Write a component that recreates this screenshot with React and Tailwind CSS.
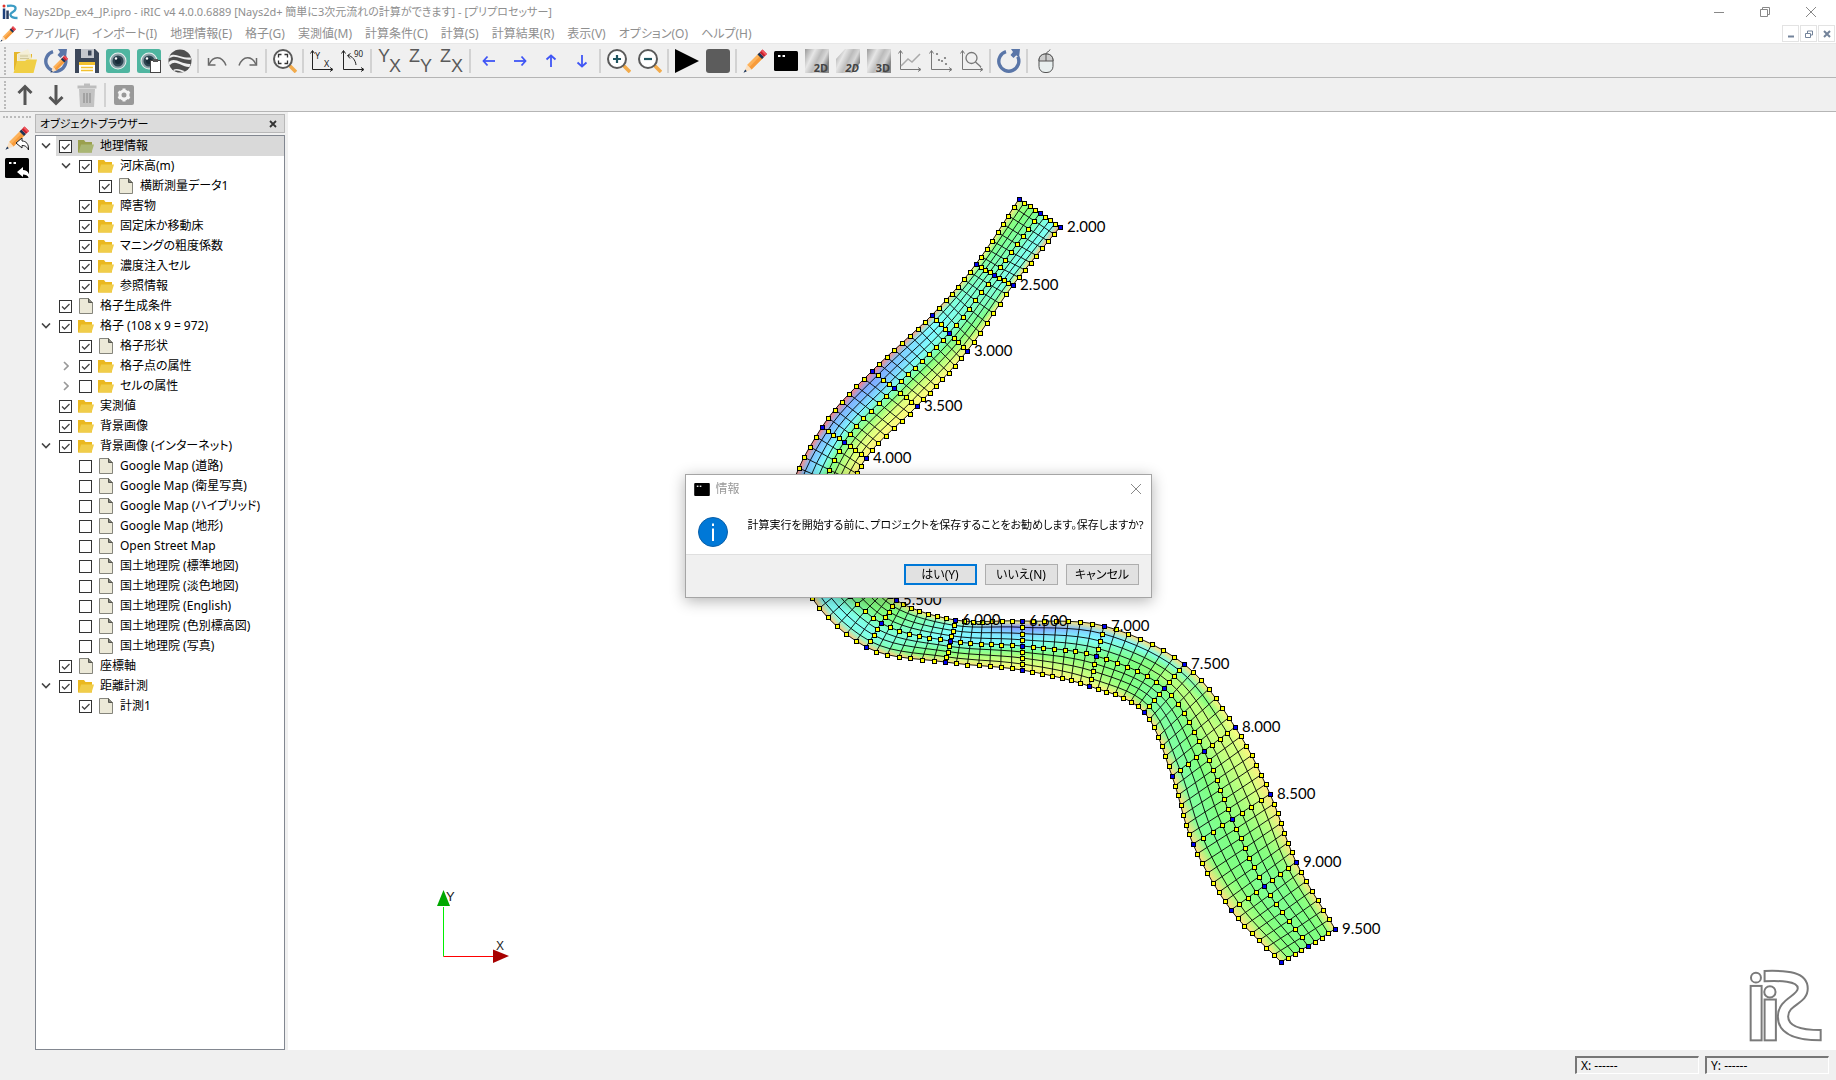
import React from "react";

/* ---------- small shared icons ---------- */

const Svg = ({ children, box = "0 0 24 24", className = "size-6" }) => (
  <svg viewBox={box} className={className} fill="none" aria-hidden="true">
    {children}
  </svg>
);

const PencilShape = () => (
  <>
    <path d="M4 16 L16 4 L20.500 8.500 L8.500 20.500 Z" fill="#fdb25a" />
    <path d="M6.500 18 L18 6 L20.500 8.500 L8.500 20.500 Z" fill="#f79b3b" />
    <path d="M4 16 L8.500 20.500 L1 23.500 Z" fill="#fbe0c0" />
    <path d="M2.200 20.500 L3.800 22.300 L0.500 23.800 Z" fill="#12305a" />
    <path d="M14.500 5.500 L16.500 3.500 L21 8 L19 10 Z" fill="#1d3557" />
    <path d="M16.500 3.500 L19.500 0.500 L24 5 L21 8 Z" fill="#c8202c" />
    <path d="M18 2 L19.500 0.500 L24 5 L22.500 6.500 Z" fill="#f0545c" />
  </>
);

const Pencil = ({ className }) => <Svg className={className}><PencilShape /></Svg>;

const Solver = ({ className, box = "0 0 24 20" }) => (
  <Svg box={box} className={className}>
    <rect width="24" height="20" rx="1.500" fill="#000" />
    <rect x="4" y="4" width="2.500" height="2" fill="#fff" />
    <rect x="8.500" y="4" width="2.500" height="2" fill="#fff" />
  </Svg>
);

const OpenFolder = () => (
  <Svg>
    <path d="M1 3 h6 l2 2 h10 v16 H1 Z" fill="#e5b62a" />
    <path d="M4 5 L15 0 L20 12 H4 Z" fill="#f4efd8" />
    <path d="M5 5 H18 V14 H5 Z" fill="#efe9c9" />
    <path d="M7 7 h8 M7 9.500 h9" stroke="#cfc79a" />
    <path d="M0.500 24 L4 12 H12 L14 10.500 H24 L20.500 24 Z" fill="#f0cf45" />
  </Svg>
);

const SwirlShape = () => (
  <>
    <path d="M9 2.600 A10 10 0 1 0 20.800 7.800" stroke="#5a76a8" strokeWidth="3.400" />
    <path d="M14 0 H23 L22 9 L19.300 6.200 L16.500 9 L13.500 6 L16 3 Z" fill="#5a76a8" />
  </>
);

const Reload = () => <Svg><SwirlShape /></Svg>;

const ReloadEdit = () => (
  <Svg>
    <SwirlShape />
    <g transform="translate(6 6) scale(.75)"><PencilShape /></g>
  </Svg>
);

const Save = () => (
  <Svg>
    <path d="M0 0 H20 L24 4 V24 H0 Z" fill="#3c4759" />
    <rect x="6" y="0" width="13" height="9" fill="#c5c8ce" />
    <rect x="13" y="1.500" width="3.500" height="5" fill="#3c4759" />
    <rect x="4" y="13" width="16" height="11" fill="#fff" />
    <rect x="4" y="13" width="16" height="3" fill="#f3c12f" />
    <path d="M6 18.500 h12 M6 21.500 h12" stroke="#f3c12f" strokeWidth="1.600" />
  </Svg>
);

const Eye = ({ clip }) => (
  <Svg>
    <rect width="24" height="24" rx="2.500" fill="#4fb5a0" />
    <circle cx="12" cy="12" r="8.500" fill="#e9f1f0" />
    <circle cx="12" cy="12" r="7.500" fill="#8ea3aa" />
    <circle cx="12" cy="12" r="5.500" fill="#2d4350" />
    <circle cx="12" cy="12" r="3" fill="#182b38" />
    <circle cx="10" cy="9.500" r="1.200" fill="#fff" />
    {clip && (
      <>
        <rect x="13.500" y="11.500" width="10" height="12" fill="#fff" stroke="#444" />
        <rect x="16" y="10" width="5" height="3" fill="#555" />
      </>
    )}
  </Svg>
);

const Globe = () => (
  <Svg>
    <circle cx="12" cy="12" r="11.500" fill="#4f4f4f" />
    <path d="M1.500 7 C7 3 13 9.500 22.800 8.500 L23 10.500 C14 12 8 4.500 1 9.500 Z" fill="#f0f0f0" />
    <path d="M0.600 13.500 C6 7 13 15.500 22.500 15 L21.500 18 C13 18.500 8 9.500 1.500 16.500 Z" fill="#f0f0f0" />
    <path d="M5 21 C9 18.500 13 21 17 22.300 L14.500 23.300 C11 22 9 21 6.500 22 Z" fill="#f0f0f0" />
  </Svg>
);

const Undo = ({ flip }) => (
  <Svg>
    <g transform={flip ? "translate(24 0) scale(-1 1)" : undefined} stroke="#6a6a6a" strokeWidth="1.500">
      <path d="M3.500 9 V16 H10.500" />
      <path d="M4 15.500 C8 6.500 17 6 21 16.500" />
    </g>
  </Svg>
);

const Lens = ({ children, color = "#f2ab4c" }) => (
  <Svg>
    <path d="M16.500 16.500 L23 23" stroke={color} strokeWidth="3.600" />
    <circle cx="10" cy="10" r="9" fill="#fff" stroke="#5a5a5a" strokeWidth="2" />
    {children}
  </Svg>
);

const Axes = ({ children, color = "#222" }) => (
  <Svg>
    <path d="M2.500 2 V20.500 H22" stroke={color} />
    <path d="M0.500 4.500 L2.500 1.500 L4.500 4.500 M20 18.500 L23 20.500 L20 22.500" stroke={color} />
    {children}
  </Svg>
);

const Pair = ({ a, b }) => (
  <Svg>
    <g fontSize="18" fontFamily="Liberation Sans" fill="#5a5a5a">
      <text x="0" y="13">{a}</text>
      <text x="11" y="23">{b}</text>
    </g>
  </Svg>
);

const Arrow = ({ angle }) => (
  <Svg>
    <g transform={`rotate(${angle} 12 12)`} stroke="#3f55f5" strokeWidth="1.800">
      <path d="M18 12 H6.500" />
      <path d="M10.500 7.500 L6.500 12 L10.500 16.500" />
    </g>
  </Svg>
);

const Post = ({ text, id, skew }) => (
  <Svg>
    <defs>
      <linearGradient id={id} x1="0" y1="0" x2="1" y2="0.5">
        <stop offset="0" stopColor="#999" />
        <stop offset="0.35" stopColor="#e6e6e6" />
        <stop offset="0.6" stopColor="#bbb" />
        <stop offset="0.8" stopColor="#d8d8d8" />
        <stop offset="1" stopColor="#888" />
      </linearGradient>
    </defs>
    <path d={skew ? "M9 0 H24 V14 L16 24 H0 V10 Z" : "M0 0 H24 V24 H0 Z"} fill={`url(#${id})`} />
    <text x="23" y="23" textAnchor="end" fontSize="11" fontWeight="700" fontStyle={skew ? "italic" : "normal"} fill="#444">
      {text}
    </text>
  </Svg>
);

const Mouse = () => (
  <Svg>
    <path d="M12 6 C12 2 15 3.500 16 0.500" stroke="#555" />
    <rect x="5" y="5" width="14" height="18.500" rx="6" fill="#e8efef" stroke="#555" />
    <path d="M5 12 V11 a6 6 0 0 1 6 -6 h2 a6 6 0 0 1 6 6 v1 Z" fill="#ccc" stroke="#555" />
    <path d="M12 5 V12" stroke="#555" />
  </Svg>
);

const UpArrow = ({ down }) => (
  <Svg>
    <g transform={down ? "rotate(180 12 12)" : undefined} stroke="#555" strokeWidth="3">
      <path d="M12 22 V4" />
      <path d="M5.500 10 L12 3.500 L18.500 10" />
    </g>
  </Svg>
);

const Trash = () => (
  <Svg>
    <path d="M4 6 H20 L19 24 H5 Z" fill="#c3c3c3" />
    <path d="M2.500 2.500 h19 v3 h-19 Z M9 0.500 h6 v2 h-6 Z" fill="#bdbdbd" />
    <path d="M9 10 v10 M12 10 v10 M15 10 v10" stroke="#999" strokeWidth="1.500" />
  </Svg>
);

const Gear = () => (
  <Svg>
    <rect x="2" y="2" width="20" height="20" rx="2" fill="#999" />
    <circle cx="12" cy="12" r="4" stroke="#f4f4f4" strokeWidth="3" />
    <path d="M12 5.500 V8 M12 16 v2.500 M6.400 8.700 l2 1.200 M15.600 14.100 l2 1.200 M6.400 15.300 l2 -1.200 M15.600 9.900 l2 -1.200" stroke="#f4f4f4" strokeWidth="3" />
  </Svg>
);

const ReturnArrow = ({ dark }) => (
  <path
    d="M11 17 L17 12 V15 C21 15 24 18 23.500 24 C22 20.500 20 19.500 17 19.500 V22 Z"
    fill="#fff"
    stroke={dark ? "none" : "#222"}
  />
);

const IricMark = () => (
  <Svg box="0 0 16 16" className="size-4">
    <circle cx="2" cy="2" r="1.500" fill="#e0342b" />
    <path d="M0.800 4.500 h2.500 V15 h-2.500 Z" fill="#1d3f7a" />
    <path d="M4.300 6.500 h2.500 V15 h-2.500 Z" fill="#2a3c60" />
    <path d="M5 2 C11 1 14 2 13.500 5 C13 8 8 8 8.500 11 C9 13.500 12 14 15.500 14" stroke="#3c9cc4" strokeWidth="2.300" />
  </Svg>
);

/* ---------- window chrome ---------- */

const menus = [
  "ファイル(F)", "インポート(I)", "地理情報(E)", "格子(G)", "実測値(M)", "計算条件(C)",
  "計算(S)", "計算結果(R)", "表示(V)", "オプション(O)", "ヘルプ(H)",
];

const TitleBar = () => (
  <header className="flex h-6 items-center bg-white pl-0.5 text-[#8f8f8f]">
    <IricMark />
    <h1 className="ml-1.5 whitespace-nowrap text-[11px]">
      Nays2Dp_ex4_JP.ipro - iRIC v4 4.0.0.6889 [Nays2d+ 簡単に3次元流れの計算ができます] - [プリプロセッサー]
    </h1>
    <div className="ml-auto flex pr-0.5">
      <button aria-label="最小化" className="grid h-5 w-[46px] place-items-center">
        <Svg box="0 0 10 10" className="size-2.5"><path d="M0 5.500 H10" stroke="#888" /></Svg>
      </button>
      <button aria-label="元に戻す" className="grid h-5 w-[46px] place-items-center">
        <Svg box="0 0 10 10" className="size-2.5">
          <path d="M0.500 2.500 h7 v7 h-7 Z M2.500 2.500 v-2 h7 v7 h-2" stroke="#888" />
        </Svg>
      </button>
      <button aria-label="閉じる" className="grid h-5 w-[46px] place-items-center">
        <Svg box="0 0 10 10" className="size-2.5"><path d="M0 0 L10 10 M10 0 L0 10" stroke="#888" /></Svg>
      </button>
    </div>
  </header>
);

const MdiButton = ({ label, children }) => (
  <button aria-label={label} className="grid size-[17px] place-items-center border border-[#e3e3e3] bg-white">
    <Svg box="0 0 8 8" className="size-2">{children}</Svg>
  </button>
);

const MenuBar = () => (
  <nav className="flex h-5 items-center border-b border-[#e8e8e8] bg-white pr-px text-[#8f8f8f]">
    <Pencil className="size-4" />
    <div className="ml-2 flex gap-[13px] whitespace-nowrap text-xs">
      {menus.map((m) => <button key={m}>{m}</button>)}
    </div>
    <div className="ml-auto flex gap-px">
      <MdiButton label="ウィンドウを最小化"><path d="M1 6.500 h6" stroke="#73839a" strokeWidth="2" /></MdiButton>
      <MdiButton label="ウィンドウを元に戻す"><path d="M0.500 3.500 h5 v4 h-5 Z M2.500 3 v-2 h5 v4 h-1.500" stroke="#73839a" /></MdiButton>
      <MdiButton label="ウィンドウを閉じる"><path d="M1 1 L7 7 M7 1 L1 7" stroke="#73839a" strokeWidth="2" /></MdiButton>
    </div>
  </nav>
);

const Grip = () => <span className="h-7 w-0.5 shrink-0 border-l-2 border-dotted border-[#bbb]" />;

const tools = [
  ["プロジェクトを開く", <OpenFolder />],
  ["再読み込みと編集", <ReloadEdit />],
  ["保存", <Save />],
  ["スナップショット", <Eye />],
  ["スナップショットをコピー", <Eye clip />],
  ["Google Earth", <Globe />],
  null,
  ["元に戻す", <Undo />],
  ["やり直し", <Undo flip />],
  null,
  ["全体表示", (
    <Lens>
      <path d="M5.500 8.500 v-3 h3 M11.500 5.500 h3 v3 M14.500 11.500 v3 h-3 M8.500 14.500 h-3 v-3" stroke="#333" strokeWidth="1.300" />
    </Lens>
  )],
  null,
  ["回転リセット", (
    <Axes>
      <text x="5" y="10" fontSize="9" fill="#222">Y</text>
      <text x="14" y="18" fontSize="9" fill="#222">X</text>
    </Axes>
  )],
  ["90度回転", (
    <Axes>
      <path d="M7 6.500 C11 7 14.500 11 15 16 M9.500 4.500 L6.500 6.500 L9 9.500" stroke="#222" />
      <text x="13" y="8" fontSize="8" fill="#222">90</text>
    </Axes>
  )],
  null,
  ["XY平面", <Pair a="Y" b="X" />],
  ["YZ平面", <Pair a="Z" b="Y" />],
  ["XZ平面", <Pair a="Z" b="X" />],
  null,
  ["左へ移動", <Arrow angle={0} />],
  ["右へ移動", <Arrow angle={180} />],
  ["上へ移動", <Arrow angle={90} />],
  ["下へ移動", <Arrow angle={270} />],
  null,
  ["拡大", <Lens><path d="M6 10 h8 M10 6 v8" stroke="#1f5560" strokeWidth="2.200" /></Lens>],
  ["縮小", <Lens><path d="M6 10 h8" stroke="#1f5560" strokeWidth="2.200" /></Lens>],
  null,
  ["計算実行", <Svg><path d="M0 0 L24 12 L0 24 Z" fill="#000" /></Svg>],
  ["計算停止", <Svg><rect width="24" height="24" rx="3" fill="#5c5c5c" /></Svg>],
  null,
  ["プリプロセッサー", <Pencil />],
  ["ソルバーコンソール", <Solver className="h-5 w-6" />],
  ["2次元可視化", <Post id="p1" text="2D" />],
  ["鳥瞰2次元可視化", <Post id="p2" text="2D" skew />],
  ["3次元可視化", <Post id="p3" text="3D" />],
  ["グラフ", <Axes color="#777"><path d="M3 17 L10 10 L14 13 L22 5" stroke="#aaa" strokeWidth="1.500" /></Axes>],
  ["散布図", (
    <Axes color="#777">
      {[[8, 5], [10, 11], [16, 9], [17, 15], [13, 12]].map(([x, y]) => (
        <circle key={x} cx={x} cy={y} r="1.100" fill="#777" />
      ))}
    </Axes>
  )],
  ["検証", (
    <Axes color="#777">
      <circle cx="11.500" cy="9" r="5.500" stroke="#777" strokeWidth="1.300" />
      <path d="M15.500 13 L21 18" stroke="#777" strokeWidth="1.300" />
    </Axes>
  )],
  null,
  ["更新", <Reload />],
  null,
  ["マウス操作", <Mouse />],
];

const ToolButton = ({ label, children }) => (
  <button aria-label={label} title={label} className="grid h-8 w-[31px] shrink-0 place-items-center">
    {children}
  </button>
);

const Divider = () => <span className="mx-0.5 h-6 w-0.5 shrink-0 bg-[#d2d2d2]" />;

const ToolBars = () => (
  <>
    <div role="toolbar" aria-label="メイン" className="flex h-[34px] items-center border-b border-[#b5b5b5] pl-1">
      <Grip />
      <div className="ml-[3px] flex items-center">
        {tools.map((t, i) => (t ? <ToolButton key={i} label={t[0]}>{t[1]}</ToolButton> : <Divider key={i} />))}
      </div>
    </div>
    <div role="toolbar" aria-label="編集" className="flex h-[34px] items-center border-b border-[#b5b5b5] pl-1">
      <Grip />
      <div className="ml-[3px] flex items-center">
        <ToolButton label="上へ"><UpArrow /></ToolButton>
        <ToolButton label="下へ"><UpArrow down /></ToolButton>
        <ToolButton label="削除"><Trash /></ToolButton>
        <Divider />
        <ToolButton label="設定"><Gear /></ToolButton>
      </div>
    </div>
  </>
);

/* ---------- object browser ---------- */

const F = "folder";
const D = "doc";
// [level, icon, label, checked, expander]
const tree = [
  [0, F, "地理情報", true, "open"],
  [1, F, "河床高(m)", true, "open"],
  [2, D, "横断測量データ1", true],
  [1, F, "障害物", true],
  [1, F, "固定床か移動床", true],
  [1, F, "マニングの粗度係数", true],
  [1, F, "濃度注入セル", true],
  [1, F, "参照情報", true],
  [0, D, "格子生成条件", true],
  [0, F, "格子 (108 x 9 = 972)", true, "open"],
  [1, D, "格子形状", true],
  [1, F, "格子点の属性", true, "closed"],
  [1, F, "セルの属性", false, "closed"],
  [0, F, "実測値", true],
  [0, F, "背景画像", true],
  [0, F, "背景画像 (インターネット)", true, "open"],
  [1, D, "Google Map (道路)", false],
  [1, D, "Google Map (衛星写真)", false],
  [1, D, "Google Map (ハイブリッド)", false],
  [1, D, "Google Map (地形)", false],
  [1, D, "Open Street Map", false],
  [1, D, "国土地理院 (標準地図)", false],
  [1, D, "国土地理院 (淡色地図)", false],
  [1, D, "国土地理院 (English)", false],
  [1, D, "国土地理院 (色別標高図)", false],
  [1, D, "国土地理院 (写真)", false],
  [0, D, "座標軸", true],
  [0, F, "距離計測", true, "open"],
  [1, D, "計測1", true],
];
const indents = ["pl-0", "pl-5", "pl-10"];

const FolderIcon = ({ selected }) => (
  <Svg box="0 0 16 13" className="h-[13px] w-4">
    <path d="M0 0 H6 L7.500 2 H14 V12.500 H0 Z" fill={selected ? "#9aa04e" : "#eab81f"} />
    <path d="M3 4.500 H16 L13.500 12.500 H0.500 Z" fill={selected ? "#a9b673" : "#f0cd4a"} />
  </Svg>
);

const DocIcon = () => (
  <Svg box="0 0 16 16" className="size-4">
    <path d="M1.500 0.500 H10.500 L14.500 4.500 V15.500 H1.500 Z" fill="#ece9d8" stroke="#85857c" />
    <path d="M10.500 0.500 V4.500 H14.500" fill="#85857c" stroke="#55554e" />
  </Svg>
);

const TreeRow = ({ row: [level, icon, label, checked, expander], selected }) => (
  <li className={indents[level]}>
    <div className="flex h-5 items-center">
      <button
        aria-label={expander ? `${label}の展開` : undefined}
        disabled={!expander}
        tabIndex={expander ? 0 : -1}
        aria-hidden={!expander}
        className="grid h-5 w-5 shrink-0 place-items-center"
      >
        {expander === "open" && <Svg box="0 0 10 6" className="h-1.5 w-2.5"><path d="M1 0.500 L5 4.500 L9 0.500" stroke="#444" strokeWidth="1.600" /></Svg>}
        {expander === "closed" && <Svg box="0 0 6 10" className="h-2.5 w-1.5"><path d="M1 1 L5 5 L1 9" stroke="#999" strokeWidth="1.600" /></Svg>}
      </button>
      <label className={`flex h-5 flex-1 items-center pl-[3px] ${selected ? "bg-[#d9d9d9]" : ""}`}>
        <span className="grid size-[13px] shrink-0">
          <input
            type="checkbox"
            defaultChecked={checked}
            className="peer col-start-1 row-start-1 size-[13px] appearance-none border border-[#333] bg-white"
          />
          <svg viewBox="0 0 13 13" className="pointer-events-none invisible col-start-1 row-start-1 size-[13px] peer-checked:visible" fill="none">
            <path d="M3 6.500 L5.500 9 L10.500 4" stroke="#444" strokeWidth="1.300" />
          </svg>
        </span>
        <span className="ml-1.5 grid size-4 shrink-0 place-items-center">
          {icon === F ? <FolderIcon selected={selected} /> : <DocIcon />}
        </span>
        <span className="ml-1.5 whitespace-nowrap text-xs">{label}</span>
      </label>
    </div>
  </li>
);

const ObjectBrowser = () => (
  <aside className="ml-0.5 flex w-[250px] shrink-0 flex-col pt-0.5">
    <div className="mb-0.5 flex h-[19px] items-center justify-between border border-[#b8b8b8] bg-[#dcdcdc] pl-1 pr-[7px]">
      <h2 className="text-[11px] leading-4">オブジェクトブラウザー</h2>
      <button aria-label="閉じる">
        <Svg box="0 0 8 8" className="size-2"><path d="M1 1 L7 7 M7 1 L1 7" stroke="#333" strokeWidth="1.800" /></Svg>
      </button>
    </div>
    <ul className="flex-1 border border-[#828790] bg-white">
      {tree.map((row, i) => <TreeRow key={i} row={row} selected={i === 0} />)}
    </ul>
  </aside>
);

/* ---------- river grid ---------- */

// Cross sections: left bank, centre line, right bank, steps to the next
// section, then the hues of the nine nodes from left to right.
const sections = [
  [1019, 199, 1040, 213, 1060, 227, 8, [45, 105, 115, 122, 135, 160, 172, 178, 20]],
  [976, 264, 994, 275, 1013, 285, 7, [60, 135, 148, 150, 152, 162, 172, 160, 55]],
  [932, 315, 949, 333, 967, 351, 8, [25, 175, 178, 172, 158, 130, 110, 85, 55]],
  [872, 371, 894, 388, 917, 406, 7, [0, 222, 212, 195, 160, 112, 78, 65, 58]],
  [822, 427, 844, 442, 866, 458, 7, [0, 212, 200, 180, 130, 100, 80, 68, 52]],
  [789, 502, 818, 508, 845, 512, 7, [10, 205, 190, 170, 130, 110, 95, 80, 52]],
  [806, 588, 833, 572, 866, 562, 7, [35, 185, 180, 150, 125, 115, 112, 100, 52]],
  [866, 647, 881, 623, 896, 600, 7, [35, 160, 172, 168, 145, 125, 118, 115, 50]],
  [945, 662, 950, 641, 955, 620, 7, [45, 95, 120, 150, 190, 185, 178, 175, 50]],
  [1022, 670, 1022, 646, 1022, 621, 7, [55, 72, 88, 120, 168, 185, 205, 238, 58]],
  [1089, 686, 1096, 656, 1104, 626, 7, [55, 82, 96, 110, 122, 150, 178, 195, 45]],
  [1144, 712, 1164, 688, 1184, 664, 7, [45, 130, 140, 135, 118, 92, 98, 160, 45]],
  [1172, 776, 1204, 751, 1235, 727, 7, [45, 138, 132, 120, 108, 92, 82, 82, 60]],
  [1193, 844, 1232, 819, 1270, 794, 7, [45, 130, 130, 122, 112, 106, 92, 78, 48]],
  [1231, 910, 1264, 886, 1296, 862, 7, [45, 95, 112, 124, 130, 130, 124, 108, 48]],
  [1281, 962, 1308, 946, 1335, 929, 0, [50, 112, 120, 122, 124, 122, 120, 112, 50]],
];

const labels = [
  ["2.000", 0], ["2.500", 1], ["3.000", 2], ["3.500", 3], ["4.000", 4], ["5.500", 7],
  ["6.000", 8], ["6.500", 9], ["7.000", 10], ["7.500", 11], ["8.000", 12],
  ["8.500", 13], ["9.000", 14], ["9.500", 15],
];

const spline = (a, b, c, d, t) =>
  0.5 * (2 * b + (c - a) * t + (2 * a - 5 * b + 4 * c - d) * t * t + (3 * b - a - 3 * c + d) * t * t * t);

const rows = [];
sections.forEach((s, i) => {
  const prev = sections[i - 1];
  const next = sections[i + 1];
  const after = sections[i + 2];
  for (let k = 0; k < Math.max(1, s[6]); k++) {
    const t = s[6] ? k / s[6] : 0;
    const v = [0, 1, 2, 3, 4, 5].map((j) => {
      if (!next) return s[j];
      const a = prev ? prev[j] : 2 * s[j] - next[j];
      const d = after ? after[j] : 2 * next[j] - s[j];
      return spline(a, s[j], next[j], d, t);
    });
    const pts = Array.from({ length: 9 }, (_, n) => {
      const f = n <= 4 ? n / 4 : (n - 4) / 4;
      const o = n <= 4 ? 0 : 2;
      return [v[o] + (v[o + 2] - v[o]) * f, v[o + 1] + (v[o + 3] - v[o + 1]) * f];
    });
    const hues = s[7].map((h, n) => (next ? h + (next[7][n] - h) * t : h));
    rows.push({ pts, hues, main: k === 0 });
  }
});

const path = (pts) => "M" + pts.map(([x, y]) => `${x.toFixed(1)} ${y.toFixed(1)}`).join("L");

const River = () => (
  <g>
    <defs>
      {rows.slice(0, -1).map((r, i) => {
        const q = rows[i + 1];
        const mid = (n, k) => (r.pts[n][k] + q.pts[n][k]) / 2;
        return (
          <linearGradient key={i} id={`strip${i}`} gradientUnits="userSpaceOnUse" x1={mid(0, 0)} y1={mid(0, 1)} x2={mid(8, 0)} y2={mid(8, 1)}>
            {r.hues.map((h, n) => (
              <stop key={n} offset={n / 8} stopColor={`hsl(${(h + q.hues[n]) / 2} 100% 75%)`} />
            ))}
          </linearGradient>
        );
      })}
    </defs>
    {rows.slice(0, -1).map((r, i) => {
      const q = rows[i + 1];
      const fill = `url(#strip${i})`;
      return <path key={i} d={path([r.pts[0], r.pts[8], q.pts[8], q.pts[0]]) + "Z"} fill={fill} stroke={fill} strokeWidth="0.500" />;
    })}
    <g fill="none" stroke="#000" strokeWidth="0.900">
      {rows.map((r, i) => <path key={i} d={path(r.pts)} />)}
      {Array.from({ length: 9 }, (_, n) => <path key={n} d={path(rows.map((r) => r.pts[n]))} />)}
    </g>
    <g stroke="#000" shapeRendering="crispEdges">
      {rows.map((r, i) =>
        r.pts.map(([x, y], n) => {
          const key = r.main && n % 4 === 0;
          if (!r.main && n % 4 !== 0) return null;
          return (
            <rect key={`${i}-${n}`} x={Math.round(x) - 1.5} y={Math.round(y) - 1.5} width="4" height="4" fill={key ? "#0000f0" : "#ff0"} />
          );
        })
      )}
    </g>
    <g className="font-[Lato]" fontSize="15" fill="#000">
      {labels.map(([text, i]) => (
        <text key={text} x={sections[i][4] + 7} y={sections[i][5] + 5}>{text}</text>
      ))}
    </g>
  </g>
);

const MapView = () => (
  <main className="relative min-w-0 flex-1 overflow-hidden bg-white">
    <svg className="absolute inset-0 size-full" role="img" aria-label="計算格子">
      <g transform="translate(-288 -112)"><River /></g>
    </svg>
    <svg viewBox="0 0 80 80" className="absolute bottom-[81px] left-[148px] size-20" role="img" aria-label="座標軸">
      <path d="M7.500 67.500 V18" stroke="#00f000" />
      <path d="M7.500 67.500 H58" stroke="#f00" />
      <path d="M7.500 1 L14 17 H1 Z" fill="#00a800" />
      <path d="M73 67 L57 60.500 V74 Z" fill="#a80000" />
      <text x="10" y="12" fontSize="13" fontFamily="Liberation Sans" fill="#222">Y</text>
      <text x="60" y="61" fontSize="12" fontFamily="Liberation Sans" fill="#222">X</text>
    </svg>
    <svg viewBox="628 84 220 220" className="absolute bottom-2 right-3.5 size-[73px]" fill="none" stroke="#7a7a7a" strokeWidth="6" role="img" aria-label="iRIC">
      <circle cx="649" cy="110" r="15" />
      <rect x="633" y="135" width="33" height="164" />
      <circle cx="691" cy="153" r="17" />
      <rect x="675" y="176" width="34" height="123" />
      <path d="M675 90 C740 88 805 90 805 143 C805 190 746 190 746 227 C746 262 800 268 844 268 V299 C790 299 715 290 715 227 C715 175 775 165 775 142 C775 120 720 119 675 121 Z" />
    </svg>
  </main>
);

/* ---------- dialog ---------- */

const Dialog = () => (
  <div className="pointer-events-none fixed inset-0 flex items-center justify-center pb-2">
    <section
      role="dialog"
      aria-labelledby="dialog-title"
      className="pointer-events-auto w-[467px] border border-[#a5a5a5] bg-white shadow-[0_3px_14px_rgba(0,0,0,0.3)]"
    >
      <div className="flex h-7 items-center pl-2 pr-2.5 text-[#999]">
        <Solver className="h-[13px] w-4" />
        <h2 id="dialog-title" className="ml-1.5 text-xs">情報</h2>
        <button aria-label="閉じる" className="ml-auto">
          <Svg box="0 0 10 10" className="size-2.5"><path d="M0 0 L10 10 M10 0 L0 10" stroke="#888" /></Svg>
        </button>
      </div>
      <div className="flex h-[51px] gap-5 pl-3 pt-3.5">
        <Svg box="0 0 30 30" className="size-[30px] shrink-0">
          <circle cx="15" cy="15" r="14.500" fill="#0078d7" stroke="#0a5fa8" />
          <path d="M15 11.500 V24 M15 6.500 V9" stroke="#fff" strokeWidth="2" />
        </Svg>
        <p className="whitespace-nowrap text-[11px] leading-4">
          計算実行を開始する前に、プロジェクトを保存することをお勧めします。保存しますか?
        </p>
      </div>
      <div className="flex justify-end gap-2 border-t border-[#dfdfdf] bg-[#f0f0f0] pt-[9px] pr-3 pb-3 text-xs">
        <button className="h-[21px] w-[73px] border-2 border-[#0078d7] bg-[#e1e1e1] leading-4">はい(Y)</button>
        <button className="h-[21px] w-[73px] border border-[#adadad] bg-[#e1e1e1] leading-4">いいえ(N)</button>
        <button className="h-[21px] w-[73px] border border-[#adadad] bg-[#e1e1e1] leading-4">キャンセル</button>
      </div>
    </section>
  </div>
);

const StatusBox = ({ children }) => (
  <output className="h-[18px] w-[124px] border-b border-l-2 border-r border-t-2 border-b-white border-l-[#777] border-r-white border-t-[#777] pl-1 leading-4">
    {children}
  </output>
);

export default function App() {
  return (
    <div className="flex h-screen flex-col overflow-hidden bg-[#f0f0f0] font-['Noto_Sans','Noto_Sans_CJK_JP',sans-serif] text-xs text-black [font-feature-settings:'palt']">
      <TitleBar />
      <MenuBar />
      <ToolBars />
      <div className="flex min-h-0 flex-1">
        <div className="flex w-[33px] shrink-0 flex-col items-center gap-2 pt-1">
          <span className="h-0.5 w-7 border-t-2 border-dotted border-[#bbb]" />
          <button aria-label="プリプロセッサーを表示">
            <Svg><PencilShape /><ReturnArrow /></Svg>
          </button>
          <button aria-label="コンソールを表示">
            <Svg box="0 0 24 20" className="h-5 w-6">
              <rect width="24" height="20" rx="1.500" fill="#000" />
              <path d="M4 4 h2.500 v2 h-2.500 Z M8.500 4 h2.500 v2 h-2.500 Z" fill="#fff" />
              <g transform="translate(1 -3)"><ReturnArrow dark /></g>
            </Svg>
          </button>
        </div>
        <ObjectBrowser />
        <div className="w-[3px] shrink-0" />
        <MapView />
      </div>
      <footer className="flex h-[30px] shrink-0 items-center justify-end gap-1.5 pr-[7px]">
        <StatusBox>X: ------</StatusBox>
        <StatusBox>Y: ------</StatusBox>
      </footer>
      <Dialog />
    </div>
  );
}
